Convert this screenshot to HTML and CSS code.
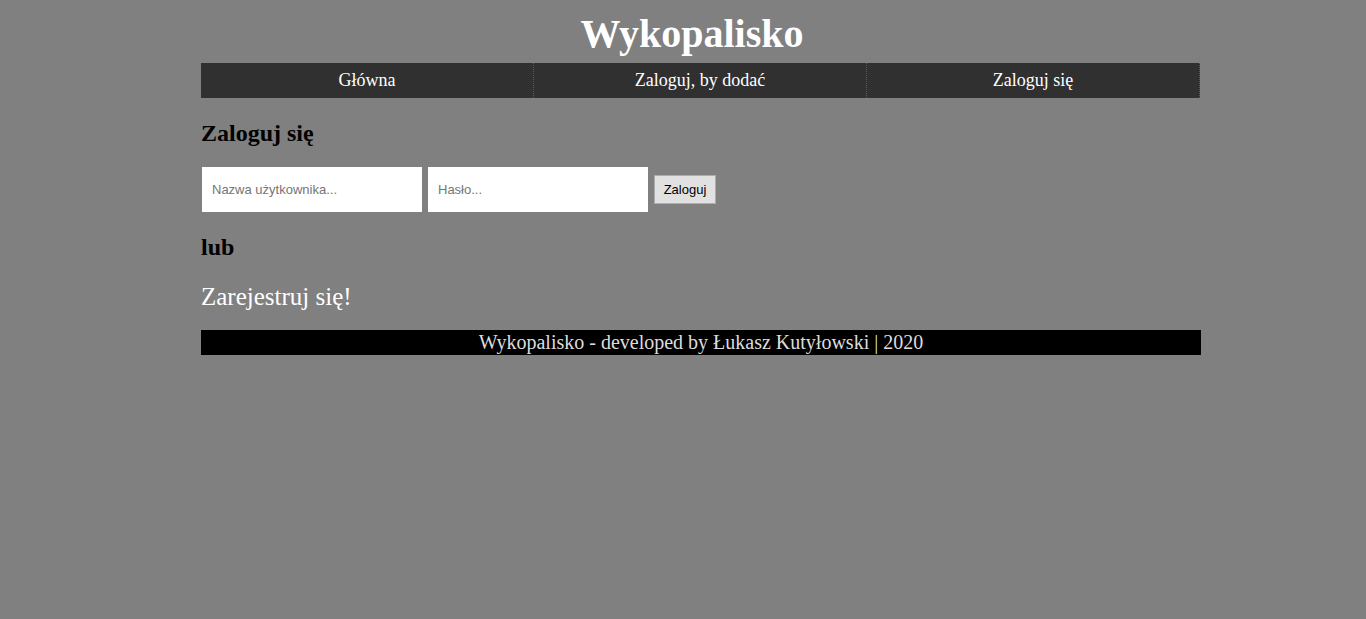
FILE: index.html
```html
<!DOCTYPE html>
<html lang="pl">
<head>
<meta charset="utf-8">
<title>Wykopalisko</title>
<link rel="stylesheet" href="styles.css">
</head>
<body>
<h1 class="title">Wykopalisko</h1>
<div class="page">
  <nav class="nav">
    <a class="nav-item" href="#">Główna</a>
    <a class="nav-item" href="#">Zaloguj, by dodać</a>
    <a class="nav-item" href="#">Zaloguj się</a>
  </nav>
  <main class="content">
    <h2 class="heading">Zaloguj się</h2>
    <form class="login">
      <input class="field" type="text" placeholder="Nazwa użytkownika...">
      <input class="field" type="password" placeholder="Hasło...">
      <button class="submit" type="button">Zaloguj</button>
    </form>
    <h2 class="heading heading-lub">lub</h2>
    <a class="register" href="#">Zarejestruj się!</a>
  </main>
  <footer class="footer">Wykopalisko - developed by Łukasz Kutyłowski | 2020</footer>
</div>
</body>
</html>
```
FILE: styles.css
```css
html, body {
  margin: 0;
  padding: 0;
  background: #808080;
  font-family: "Liberation Serif", "Times New Roman", serif;
}
.title {
  margin: 11px 0 6px;
  padding-left: 18px;
  text-align: center;
  font-size: 40px;
  line-height: 46px;
  font-weight: bold;
  color: #ffffff;
}
.page {
  width: 1000px;
  margin-left: calc(50% - 482px);
}
.nav {
  display: grid;
  grid-template-columns: 333px 333px 333px;
  height: 35px;
  background: #303030;
  width: 999px;
}
.nav-item {
  display: flex;
  align-items: center;
  justify-content: center;
  padding-bottom: 1px;
  border-right: 1px dotted #5a5a5a;
  color: #ffffff;
  text-decoration: none;
  font-size: 18px;
}
.content {
  padding-top: 21px;
}
.heading {
  margin: 0;
  font-size: 24px;
  line-height: 28px;
  font-weight: bold;
  color: #000000;
}
.login {
  display: flex;
  align-items: center;
  gap: 6px;
  margin: 20px 0 21px 1px;
}
.field {
  width: 220px;
  height: 45px;
  box-sizing: border-box;
  border: none;
  padding: 0 10px;
  background: #ffffff;
  font-family: "Liberation Sans", Tahoma, sans-serif;
  font-size: 13px;
  color: #000;
  outline: none;
}
.field::placeholder {
  color: #757575;
}
.submit {
  width: 62px;
  height: 29px;
  padding: 0;
  background: #e1e1e1;
  border: 1px solid #adadad;
  border-radius: 0;
  font-family: "Liberation Sans", Tahoma, sans-serif;
  font-size: 13px;
  color: #000;
}
.heading-lub {
  margin-bottom: 22px;
}
.register {
  display: block;
  font-size: 25px;
  line-height: 28px;
  color: #ffffff;
  text-decoration: none;
}
.footer {
  margin-top: 19px;
  height: 25px;
  line-height: 25px;
  background: #000000;
  color: #dddddd;
  text-align: center;
  font-size: 20px;
  width: 1000px;
}
```
